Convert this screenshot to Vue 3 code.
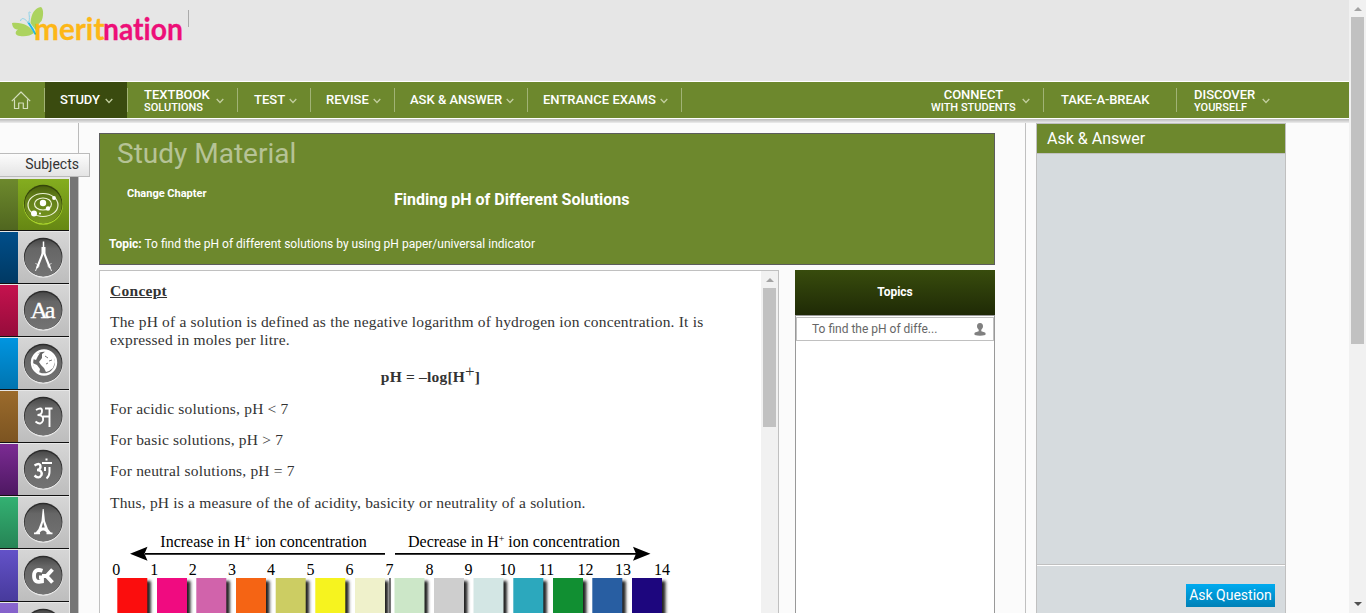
<script setup>
const leftNav = [
  { label: 'STUDY', cls: 'study', arrow: true },
  { label: 'TEXTBOOK', sub: 'SOLUTIONS', cls: 'textbook', arrow: true },
  { label: 'TEST', cls: 'test', arrow: true },
  { label: 'REVISE', cls: 'revise', arrow: true },
  { label: 'ASK & ANSWER', cls: 'ask', arrow: true },
  { label: 'ENTRANCE EXAMS', cls: 'exams', arrow: true },
]
const rightNav = [
  { label: 'CONNECT', sub: 'WITH STUDENTS', cls: 'connect', arrow: true },
  { label: 'TAKE-A-BREAK', cls: 'break' },
  { label: 'DISCOVER', sub: 'YOURSELF', cls: 'discover', arrow: true },
]
const subjects = [
  { id: 'science', from: '#6d892d', to: '#50661f' },
  { id: 'maths', from: '#004e8a', to: '#003963' },
  { id: 'english', from: '#c5124e', to: '#960c3b' },
  { id: 'social', from: '#0095e0', to: '#0074b0' },
  { id: 'hindi', from: '#9b6b2c', to: '#7c5421' },
  { id: 'sanskrit', from: '#7b2b93', to: '#4e1862' },
  { id: 'french', from: '#33b172', to: '#268455' },
  { id: 'gk', from: '#6352c8', to: '#473a9c' },
  { id: 'more', from: '#8a66d0', to: '#6d4db3' },
]
const swatches = [
  { x: 7.3, c: '#fb0d0d' }, { x: 47, c: '#f00b80' }, { x: 86.3, c: '#d163ab' },
  { x: 126, c: '#f56414' }, { x: 165.7, c: '#cccd63' }, { x: 205.3, c: '#f6f31f' },
  { x: 245, c: '#eff1cb' }, { x: 284.5, c: '#cce7c8' }, { x: 324, c: '#cecece' },
  { x: 363.5, c: '#d3e6e4' }, { x: 403.3, c: '#2ca8bd' }, { x: 443, c: '#118f32' },
  { x: 482.3, c: '#285ea2' }, { x: 522, c: '#1d067e' },
]
const ticks = [6.3, 44.3, 82.8, 122, 161, 200.5, 239.5, 279.5, 319.5, 358.5, 397.5, 436.5, 475.5, 513, 552]
</script>

<template>
  <div class="screen">
    <div class="page">
      <header class="header">
        <svg class="logo" width="200" height="60" viewBox="0 0 200 60">
          <path d="M30.500 23C31 14 35 7.500 41 7C44 9 43.500 17 41.500 21C39.500 23 37.500 25 35.500 30Z" fill="#acd35f" />
          <path d="M34 33C31 26 22 22 12 23C12.500 28 15 29.500 18 29.500C14 32 15.500 36 20 36C25 37 31 35.500 34 33Z" fill="#acd35f" />
          <path d="M28 22C30 25 33 29 35.500 34.500" stroke="#24b7e8" stroke-width="1.800" fill="none" />
          <path d="M28.500 23C24 17 21 18 20.500 21M28.500 23C31 17 27 10 30.500 12.500" stroke="#8bd3ea" stroke-width="1" fill="none" />
          <text x="34" y="40.300" textLength="70.500" lengthAdjust="spacingAndGlyphs" fill="#fdb717" stroke="#fdb717">merit</text>
          <text x="103" y="40.300" textLength="80" lengthAdjust="spacingAndGlyphs" fill="#ed0f78" stroke="#ed0f78">nation</text>
        </svg>
        <span class="header-rule"></span>
      </header>

      <nav class="nav">
        <div class="item home">
          <svg width="20" height="19" viewBox="0 0 20 19" fill="none" stroke="#d4debd" stroke-width="1.200" stroke-linejoin="round">
            <path d="M.8 10.200L10 1L19.200 10.200M3.500 8.500V17.500H7.700V12H12.300V17.500H16.500V8.500" />
          </svg>
        </div>
        <div v-for="n in leftNav" :key="n.label" class="item" :class="n.cls">
          <span class="label" :class="{ double: n.sub }">{{ n.label }}<small v-if="n.sub">{{ n.sub }}</small></span>
          <svg v-if="n.arrow" class="chev" width="8" height="6" viewBox="0 0 8 6"><path d="M.7 1L4 4.500L7.300 1" /></svg>
        </div>
        <div class="fill"></div>
        <div v-for="n in rightNav" :key="n.label" class="item" :class="n.cls">
          <span class="label" :class="{ double: n.sub }">{{ n.label }}<small v-if="n.sub">{{ n.sub }}</small></span>
          <svg v-if="n.arrow" class="chev" width="8" height="6" viewBox="0 0 8 6"><path d="M.7 1L4 4.500L7.300 1" /></svg>
        </div>
      </nav>

      <div class="body">
        <aside class="side">
          <div class="side-top"></div>
          <div class="tab">Subjects</div>
          <div class="subjects">
            <div v-for="s in subjects" :key="s.id" class="subject" :class="{ active: s.id === 'science' }">
              <div class="stripe" :style="{ background: `linear-gradient(${s.from}, ${s.to})` }"></div>
              <svg class="tile" width="51" height="51" viewBox="0 0 51 51">
                <defs>
                  <linearGradient :id="'g-' + s.id" x1="0" y1="0" x2="0" y2="1">
                    <stop offset="0" :stop-color="s.id === 'science' ? '#4a610d' : '#494949'" />
                    <stop offset=".25" :stop-color="s.id === 'science' ? '#5f7b18' : '#666'" />
                    <stop offset="1" :stop-color="s.id === 'science' ? '#78981f' : '#737373'" />
                  </linearGradient>
                </defs>
                <circle cx="25.200" cy="26" r="19.700" :fill="s.id === 'science' ? '#a9d42c' : '#e9e9e9'" />
                <circle cx="25.200" cy="25" r="19.300" :fill="s.id === 'science' ? '#34450a' : '#2c2c2c'" />
                <circle cx="25.200" cy="25.900" r="18.600" :fill="'url(#g-' + s.id + ')'" />
                <g v-if="s.id === 'science'" fill="none" stroke="#eef3d8" stroke-width="1.200">
                  <ellipse cx="25" cy="26" rx="15" ry="11.500" />
                  <ellipse cx="25" cy="25" rx="8.500" ry="6" />
                  <g fill="#fff" stroke="none">
                    <circle cx="25" cy="24" r="3.200" /><circle cx="16" cy="34.500" r="3" />
                    <circle cx="30" cy="29.500" r="2.200" /><circle cx="36" cy="19" r="1.900" />
                    <circle cx="22" cy="34.500" r="1" />
                  </g>
                </g>
                <g v-else-if="s.id === 'maths'" stroke="#fff" fill="none">
                  <path d="M25.500 9.500V15" stroke-width="1.500" />
                  <path d="M25.500 15V22.500" stroke-width="4" />
                  <path d="M24.500 22L19 36M26.500 22L32 36" stroke-width="2.100" />
                  <path d="M19 35L17.500 39M32 35L33.500 39" stroke-width=".9" />
                  <path d="M17.500 31Q19 33 21.500 34M29.500 34Q32 33 33.500 31" stroke-width=".8" />
                </g>
                <text v-else-if="s.id === 'english'" class="t-en" x="25" y="33" text-anchor="middle" textLength="25">Aa</text>
                <g v-else-if="s.id === 'social'">
                  <circle cx="26" cy="24.500" r="12" fill="none" stroke="#fff" stroke-width="2.400" />
                  <path d="M24 16L28 13L33 15L36 19L37 24L35 30L31 33L28 34L26 30L23 27L21 24L24 20Z" fill="#fff" />
                  <path d="M15 21L18 16L22 15L20 18L18 22ZM14.500 25L19 27L22 31L21 35L17 32Z" fill="#fff" />
                  <path d="M27 18L30 20M31 23L34 22M28 26L30 25" stroke="#777" />
                </g>
                <g v-else-if="s.id === 'hindi'" fill="none" stroke="#fff" stroke-width="1.900">
                  <path d="M27 17.500H34.500M31.500 17V36M18 19Q24 15.500 24 20Q24 24 19.500 24Q26 24 25 29.500Q23 35 17.500 30.500M25 25.500H31" />
                </g>
                <g v-else-if="s.id === 'sanskrit'" fill="none" stroke="#fff" stroke-width="2.400">
                  <path d="M16.500 21.500Q22.500 18 22.500 23Q22 26 19 26Q24.500 26 23.500 31Q21 35.500 16.500 31.500" />
                  <path d="M24 19H34M28.500 14.500V16.500M27 23V27M31.500 23V28Q31.500 32 28.500 34.500" stroke-width="2" />
                </g>
                <g v-else-if="s.id === 'french'" fill="#fff">
                  <path d="M24.700 12H25.700L27 24L30 32L34 37H29.500Q28 33.500 25.200 33.500Q22.500 33.500 21 37H16.500L20.500 32L23.500 24Z" />
                  <path d="M16 35.500H22V37.200H16ZM28.500 35.500H34.500V37.200H28.500Z" />
                  <path d="M25.200 25L26.700 30.500H23.700Z" fill="#696969" />
                </g>
                <g v-else-if="s.id === 'gk'" fill="none" stroke="#fff" stroke-width="3.800">
                  <path d="M24.500 20.700Q16 18 16 26Q16 33.500 24 31.500V27.500H21" /><path d="M24 26H29M34.500 19.500L28.500 26L34.500 32.500" />
                </g>
              </svg>
            </div>
          </div>
        </aside>

        <main class="main">
          <section class="banner">
            <h1>Study Material</h1>
            <div class="chapter-row">
              <b class="change">Change Chapter</b>
              <h2>Finding pH of Different Solutions</h2>
            </div>
            <p class="topic"><b>Topic:</b> To find the pH of different solutions by using pH paper/universal indicator</p>
          </section>
          <div class="columns">
            <section class="lesson">
              <article class="article">
                <h3>Concept</h3>
                <p>The pH of a solution is defined as the negative logarithm of hydrogen ion concentration. It is<br>expressed in moles per litre.</p>
                <div class="formula">pH = –log[H<span class="plus">+</span>]</div>
                <p>For acidic solutions, pH &lt; 7</p>
                <p>For basic solutions, pH &gt; 7</p>
                <p class="neutral">For neutral solutions, pH = 7</p>
                <p class="last">Thus, pH is a measure of the of acidity, basicity or neutrality of a solution.</p>
                <svg class="scale" width="570" height="90" viewBox="0 0 570 90">
                  <defs><filter id="soft" x="-50%" y="-10%" width="200%" height="120%"><feGaussianBlur stdDeviation="1.500" /></filter></defs>
                  <text x="50.300" y="22.500" textLength="206.500" lengthAdjust="spacingAndGlyphs">Increase in H<tspan dy="-5" font-size="10">+</tspan><tspan dy="5"> ion concentration</tspan></text>
                  <text x="298" y="22.500" textLength="212" lengthAdjust="spacingAndGlyphs">Decrease in H<tspan dy="-5" font-size="10">+</tspan><tspan dy="5"> ion concentration</tspan></text>
                  <path d="M35 29.800H275M285 29.800H526" stroke="#000" stroke-width="1.800" />
                  <path d="M20 29.800L37.500 22.800L34.500 29.800L37.500 36.800ZM540.500 29.800L523 22.800L526 29.800L523 36.800Z" />
                  <text v-for="(t, i) in ticks" :key="i" :x="t" y="50.600" text-anchor="middle">{{ i }}</text>
                  <g v-for="s in swatches" :key="s.x">
                    <rect :x="s.x + 5" y="57" width="28.500" height="50" fill="#222" filter="url(#soft)" />
                    <rect :x="s.x" y="54" width="30" height="50" :fill="s.c" />
                  </g>
                  <path d="M280 54V90" stroke="#333" stroke-width="1.300" />
                </svg>
              </article>
              <div class="inner-bar"><i class="up"></i><div class="inner-thumb"></div></div>
            </section>
            <section class="topics">
              <div class="topics-head">Topics</div>
              <div class="topics-box">
                <div class="topic-row">
                  <span>To find the pH of diffe...</span>
                  <svg width="12" height="13" viewBox="0 0 12 13" fill="#808080"><path d="M6 0C8.200 0 9 1.500 9 3.300C9 5 8 6 7.300 6.700V8.200L11 9.500Q12 10 11.300 12Q6 13.500 .7 12Q0 10 1 9.500L4.700 8.200V6.700C4 6 3 5 3 3.300C3 1.500 3.800 0 6 0Z" /></svg>
                </div>
              </div>
            </section>
          </div>
        </main>

        <aside class="ask-panel">
          <div class="ask-head">Ask &amp; Answer</div>
          <div class="ask-body"></div>
          <div class="ask-foot"><button class="ask-btn">Ask Question</button></div>
        </aside>
      </div>
    </div>
    <div class="page-bar"><i class="up"></i><div class="page-thumb"></div><i class="down"></i></div>
  </div>
</template>

<style>
body { margin: 0; overflow: hidden; }
</style>

<style scoped>
* { box-sizing: border-box; }
.screen { display: flex; width: 1366px; height: 613px; overflow: hidden; font-family: Roboto, sans-serif; background: #fbfbfb; }
.page { width: 1349px; height: 613px; display: flex; flex-direction: column; overflow: hidden; }
.header { height: 81px; flex: none; background: #e6e6e6; display: flex; }
.logo { display: block; margin-right: -12px; }
.logo text { font-family: Lato, sans-serif; font-size: 31px; font-weight: 700; stroke-width: .3; font-variant-ligatures: none; }
.header-rule { width: 1px; height: 17px; margin-top: 10px; background: #aaa; }

.nav { flex: none; height: 38px; border-top: 1px solid #fff; border-bottom: 1px solid #fff; background: #6d882d; display: flex; box-shadow: 0 1px 0 #c2c2c2, 0 2px 0 #ccc, 0 3px 0 #d9d9d9, 0 4px 0 #e6e6e6; color: #fff; z-index: 1; }
.item { height: 36px; display: flex; align-items: center; background: linear-gradient(#a1b375, #a1b375) right 6px / 1px 24px no-repeat; }
.label { font-size: 13px; line-height: 13px; font-weight: 500; white-space: nowrap; padding-bottom: 2px; }
.label.double { padding: 2px 0 0; }
.label small { display: block; font-size: 11px; line-height: 13px; font-weight: 500; }
.chev { margin-left: auto; margin-right: 14px; margin-top: 1px; }
.chev path { fill: none; stroke: #c2ce9f; stroke-width: 1.3; }
.home { width: 45px; padding-left: 11px; }
.study { width: 82px; padding-left: 15px; background: #3a4b0f; }
.study .label { letter-spacing: -.15px; }
.textbook { width: 111px; padding-left: 17px; background-image: linear-gradient(#a1b375, #a1b375), linear-gradient(#a1b375, #a1b375); background-position: right 6px, left 6px; background-size: 1px 24px; background-repeat: no-repeat; }
.test { width: 73px; padding-left: 16px; }
.revise { width: 84px; padding-left: 15px; }
.ask { width: 133px; padding-left: 15px; }
.exams { width: 154px; padding-left: 15px; }
.fill { flex: 1; }
.connect { width: 113px; text-align: center; }
.break { width: 133px; padding-left: 17px; letter-spacing: -.1px; }
.discover { width: 172px; padding-left: 17px; background: none; }
.discover .chev { margin-right: 79px; }

.body { flex: none; height: 494px; display: flex; }
.side { width: 99px; height: 494px; flex: none; }
.side-top { width: 79px; height: 34px; border-right: 1px solid #bbb; }
.tab { width: 90px; height: 24px; border: 1px solid #bbb; border-left: 0; background: linear-gradient(#fcfcfc, #e4e4e4); font-size: 14px; line-height: 21px; color: #333; text-align: right; padding-right: 10px; }
.subjects { width: 79px; height: 436px; padding-top: 2px; overflow: hidden; background: linear-gradient(90deg, #e7e7e7 70px, #767676 70px, #767676 78px, #c4c4c4 78px); }
.subject { width: 69px; height: 52px; margin-bottom: 1px; display: flex; border-bottom: 1px solid #111; }
.stripe { width: 18px; }
.tile { display: block; background: linear-gradient(#d6d6d6, #bdbdbd); }
.active .tile { background: linear-gradient(#84ad1f, #668713); }
.t-en { font-family: "Liberation Serif", serif; font-size: 24px; fill: #fff; stroke: #fff; stroke-width: .3; }

.main { width: 927px; height: 494px; flex: none; padding-top: 14px; border-right: 1px solid #c0c0c0; }
.banner { width: 896px; height: 132px; border: 1px solid #5c5c5c; background: #6d882d; color: #fff; }
h1 { margin: 0; padding: 3px 0 0 17px; font-size: 28px; line-height: 33px; font-weight: 400; color: rgba(255, 255, 255, .5); }
.chapter-row { display: flex; padding: 21px 0 0 27px; height: 42px; line-height: 18px; }
.change { font-size: 11px; line-height: 6px; width: 267px; }
h2 { margin: 0; font-size: 16px; line-height: 18px; font-weight: 700; }
.topic { margin: 24px 0 0 9px; font-size: 12px; line-height: 16px; }
.columns { display: flex; gap: 16px; margin-top: 5px; height: 343px; }
.lesson { width: 680px; height: 343px; border: 1px solid #c0c0c0; border-bottom: 0; background: #fff; display: flex; overflow: hidden; }
.article { width: 661px; padding: 11px 0 0 10px; font: 15.5px/18px "Liberation Serif", serif; letter-spacing: .19px; color: #333; }
.article h3 { margin: 0 0 13px; font-size: 15.5px; line-height: 18px; letter-spacing: .28px; text-decoration: underline; }
.article p { margin: 0 0 13px; white-space: nowrap; }
.article .neutral { margin-bottom: 14px; }
.article .last { margin-bottom: 12px; }
.formula { margin: 0 0 14px; padding-top: 5px; height: 24px; line-height: 18px; text-align: center; font-weight: 700; width: 641px; white-space: nowrap; }
.plus { display: inline-block; line-height: 10px; font-size: 17px; font-weight: 400; vertical-align: 5px; }
.scale { display: block; font-family: "Liberation Serif", serif; font-size: 16px; letter-spacing: 0; fill: #000; }
.inner-bar { width: 17px; height: 343px; background: #f1f1f1; display: flex; flex-direction: column; align-items: center; }
.up { border: 4px solid transparent; border-top-width: 0; border-bottom-color: #a3a3a3; margin: 7px 0 6px; width: 0; height: 0; }
.inner-thumb { width: 13px; height: 139px; background: #c1c1c1; }
.topics { width: 200px; }
.topics-head { height: 45px; background: linear-gradient(#384c0d, #1f2a06); color: #fff; font-size: 12px; line-height: 45px; font-weight: 700; text-align: center; }
.topics-box { height: 298px; border: 1px solid #999; border-bottom: 0; background: #fff; padding-top: 1px; }
.topic-row { height: 24px; border: 1px solid #c0c0c0; display: flex; justify-content: space-between; align-items: center; padding: 0 7px 0 15px; font-size: 12px; color: #666; }

.ask-panel { width: 250px; height: 490px; margin: 4px 0 0 10px; border: 1px solid #c0c0c0; border-bottom: 0; background: #d6dbde; display: flex; flex-direction: column; flex: none; }
.ask-head { height: 30px; border-bottom: 1px solid #c0c0c0; background: #6d882d; color: #fff; font-size: 16px; line-height: 29px; padding-left: 10px; }
.ask-body { height: 411px; border-bottom: 1px solid #c0c0c0; }
.ask-foot { flex: 1; border-top: 1px solid #fff; padding: 18px 10px 0; display: flex; justify-content: flex-end; }
.ask-btn { width: 89px; height: 23px; border: 0; padding: 0; background: linear-gradient(#00abf0, #0080b6); color: #fff; font: 14px/23px Roboto, sans-serif; }

.page-bar { width: 17px; height: 613px; background: #f1f1f1; display: flex; flex-direction: column; align-items: center; }
.page-thumb { width: 13px; height: 327px; background: #c1c1c1; }
.down { border: 4px solid transparent; border-bottom-width: 0; border-top-color: #505050; width: 0; height: 0; margin-top: auto; margin-bottom: 7px; }
</style>
